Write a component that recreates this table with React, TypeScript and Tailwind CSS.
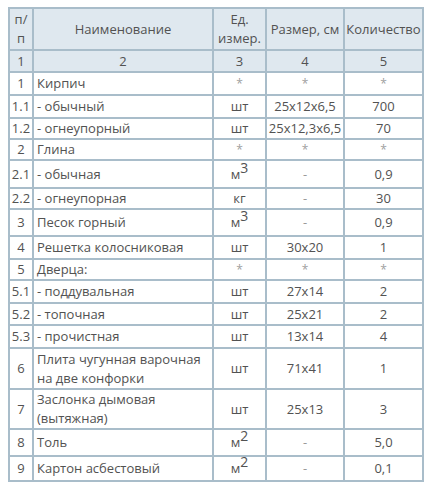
const rows: { n: string; name: React.ReactNode; unit: React.ReactNode; size: string; qty: string; h: string }[] = [
  { n: "1", name: "Кирпич", unit: "*", size: "*", qty: "*", h: "h-[23px]" },
  { n: "1.1", name: "- обычный", unit: "шт", size: "25x12x6,5", qty: "700", h: "h-[23px]" },
  { n: "1.2", name: "- огнеупорный", unit: "шт", size: "25x12,3x6,5", qty: "70", h: "h-[21px]" },
  { n: "2", name: "Глина", unit: "*", size: "*", qty: "*", h: "h-[21px]" },
  { n: "2.1", name: "- обычная", unit: "m3", size: "-", qty: "0,9", h: "h-[28px]" },
  { n: "2.2", name: "- огнеупорная", unit: "кг", size: "-", qty: "30", h: "h-[21px]" },
  { n: "3", name: "Песок горный", unit: "m3", size: "-", qty: "0,9", h: "h-[27px]" },
  { n: "4", name: "Решетка колосниковая", unit: "шт", size: "30x20", qty: "1", h: "h-[23px]" },
  { n: "5", name: "Дверца:", unit: "*", size: "*", qty: "*", h: "h-[21px]" },
  { n: "5.1", name: "- поддувальная", unit: "шт", size: "27x14", qty: "2", h: "h-[23px]" },
  { n: "5.2", name: "- топочная", unit: "шт", size: "25x21", qty: "2", h: "h-[22px]" },
  { n: "5.3", name: "- прочистная", unit: "шт", size: "13x14", qty: "4", h: "h-[23px]" },
  { n: "6", name: <>Плита чугунная варочная<br />на две конфорки</>, unit: "шт", size: "71x41", qty: "1", h: "h-[41px]" },
  { n: "7", name: <>Заслонка дымовая<br />(вытяжная)</>, unit: "шт", size: "25x13", qty: "3", h: "h-[40px]" },
  { n: "8", name: "Толь", unit: "m2", size: "-", qty: "5,0", h: "h-[27px]" },
  { n: "9", name: "Картон асбестовый", unit: "m2", size: "-", qty: "0,1", h: "h-[25px]" },
];

const cell = "border-2 border-[#a9bdca] text-center align-middle leading-[19px] p-0";

function Unit({ u }: { u: React.ReactNode }) {
  if (u === "m3" || u === "m2") {
    return (
      <span>
        м<sup className="text-[14px] leading-none align-baseline relative top-[-6px]">{u === "m3" ? "3" : "2"}</sup>
      </span>
    );
  }
  if (u === "*") return <span className="text-[#a0a0a0] text-[12px]">*</span>;
  return <>{u}</>;
}

function Plain({ v }: { v: string }) {
  if (v === "*") return <span className="text-[#a0a0a0] text-[12px]">*</span>;
  if (v === "-") return <span className="text-[#9a9a9a]">-</span>;
  return <>{v}</>;
}

export default function App() {
  return (
    <div className="w-[430px] h-[490px] bg-white pt-[7px] pl-[8px] font-['Open_Sans','Noto_Sans',sans-serif] text-[13px] text-[#525252]">
      <table className="border-collapse table-fixed w-[414px]">
        <colgroup>
          <col className="w-[24px]" />
          <col className="w-[180px]" />
          <col className="w-[53px]" />
          <col className="w-[78px]" />
          <col className="w-[79px]" />
        </colgroup>
        <thead>
          <tr className="bg-[#dfe8ef] h-[42px]">
            <th className={`${cell} font-normal`}>п/<br />п</th>
            <th className={`${cell} font-normal`}>Наименование</th>
            <th className={`${cell} font-normal`}>Ед.<br />измер.</th>
            <th className={`${cell} font-normal whitespace-nowrap`}>Размер, см</th>
            <th className={`${cell} font-normal whitespace-nowrap`}>Количество</th>
          </tr>
          <tr className="bg-[#dfe8ef] h-[22px]">
            <th className={`${cell} font-normal`}>1</th>
            <th className={`${cell} font-normal`}>2</th>
            <th className={`${cell} font-normal`}>3</th>
            <th className={`${cell} font-normal`}>4</th>
            <th className={`${cell} font-normal`}>5</th>
          </tr>
        </thead>
        <tbody>
          {rows.map((r) => (
            <tr key={r.n} className={r.h}>
              <td className={`${cell} whitespace-nowrap`}>{r.n}</td>
              <td className={`${cell} text-left pl-[3px]`}>{r.name}</td>
              <td className={cell}><Unit u={r.unit} /></td>
              <td className={`${cell} whitespace-nowrap`}><Plain v={r.size} /></td>
              <td className={cell}><Plain v={r.qty} /></td>
            </tr>
          ))}
        </tbody>
      </table>
    </div>
  );
}
